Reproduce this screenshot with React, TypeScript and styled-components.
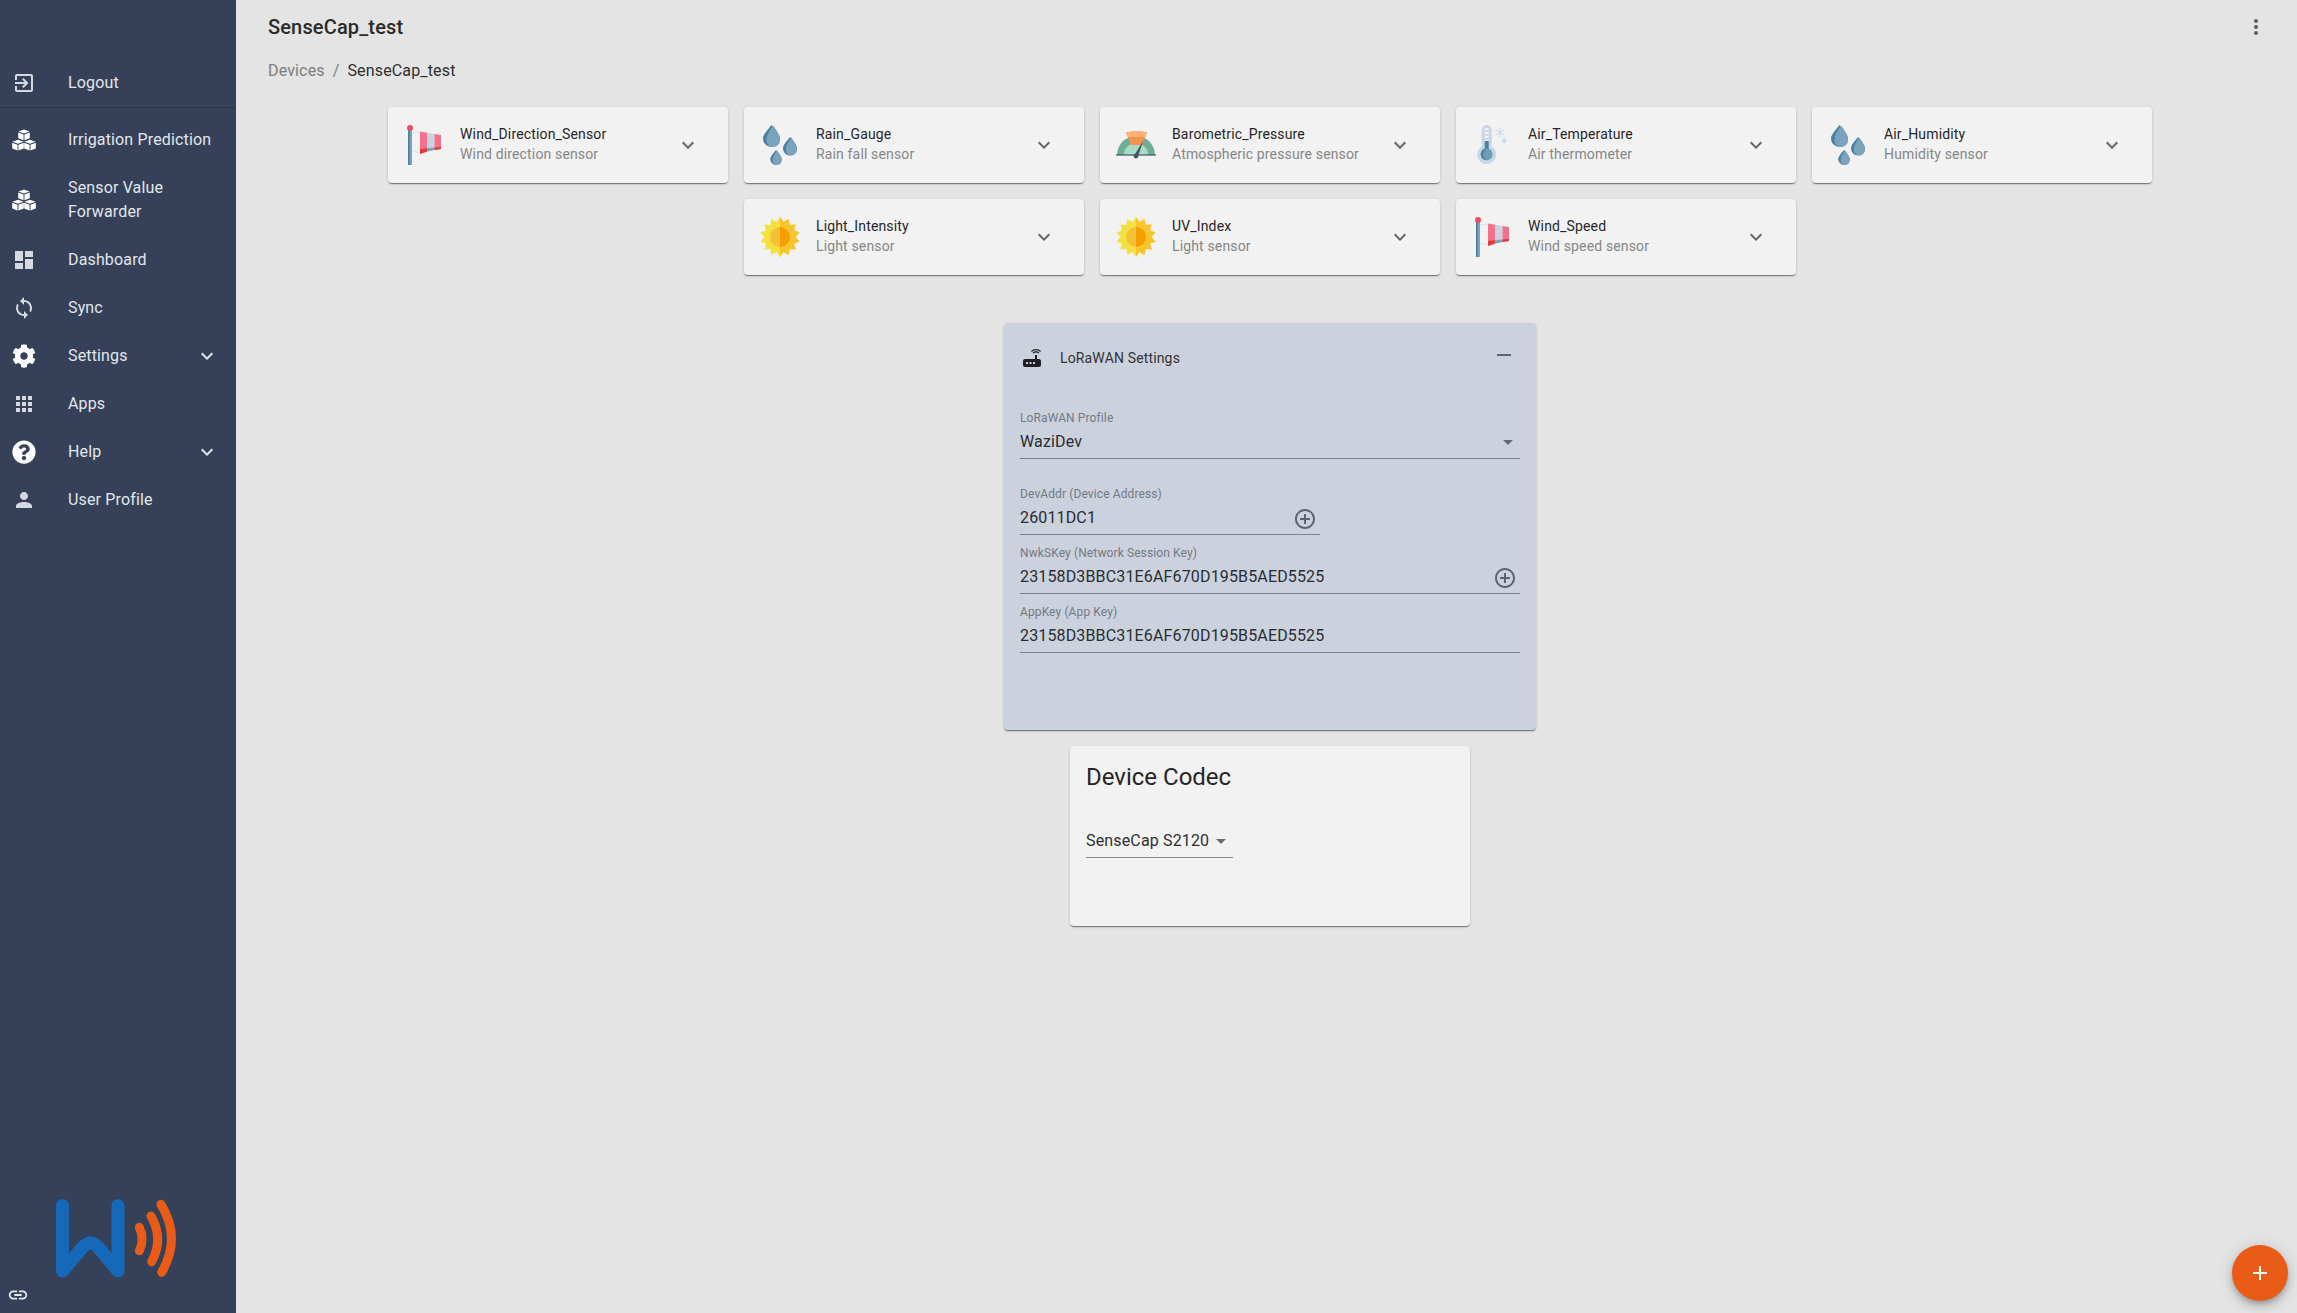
import React from "react";
import styled, { createGlobalStyle } from "styled-components";
import { FaCog, FaQuestionCircle } from "react-icons/fa";

const GlobalStyle = createGlobalStyle`
  html, body {
    margin: 0;
    padding: 0;
    height: 100%;
    overflow: hidden;
    background: #e4e4e4;
    font-family: Roboto, "Liberation Sans", sans-serif;
  }
  * {
    box-sizing: border-box;
  }
`;

const Page = styled.div`
  display: flex;
  width: 2297px;
  height: 1313px;
  overflow: hidden;
  position: relative;
  background: #e4e4e4;
`;

const Sidebar = styled.nav`
  display: flex;
  flex-direction: column;
  flex: 0 0 236px;
  padding-top: 59px;
  background: #344158;
  color: #e2e6ec;
`;

const NavDivider = styled.div`
  height: 1px;
  margin-bottom: 8px;
  background: rgba(0, 0, 0, 0.16);
`;

const NavItem = styled.div`
  display: flex;
  align-items: center;
  min-height: 48px;
  padding: 12px 17px 12px 12px;
  line-height: 24px;
`;

const NavIcon = styled.div<{ $solid?: boolean }>`
  display: flex;
  flex: 0 0 56px;
  color: ${(p) => (p.$solid ? "#ffffff" : "#d6dae0")};
`;

const NavText = styled.div`
  flex: 1;
  font-size: 16px;
  letter-spacing: 0.15px;
`;

const SidebarFooter = styled.div`
  margin-top: auto;
  padding: 0 0 7px 7px;
`;

const LogoSvg = styled.svg`
  display: block;
  width: 130px;
  height: 86px;
  margin: 0 0 3px 43px;
`;

const LinkGlyph = styled.div`
  display: flex;
  color: #e4e7ec;
`;

const Main = styled.main`
  flex: 1;
  padding: 12px 25px 0 32px;
`;

const Header = styled.header`
  display: flex;
  align-items: center;
  justify-content: space-between;
  height: 30px;
`;

const PageTitle = styled.h1`
  margin: 0;
  font-size: 20px;
  font-weight: 500;
  line-height: 30px;
  letter-spacing: 0.15px;
  color: #2b2b2b;
`;

const MoreButton = styled.div`
  display: flex;
  margin-right: 4px;
  color: #5f5f5f;
`;

const Breadcrumbs = styled.div`
  display: flex;
  gap: 8px;
  margin-top: 17px;
  font-size: 16px;
  line-height: 24px;
  letter-spacing: 0.15px;
  color: #7d7d7d;
`;

const Crumb = styled.span<{ $current?: boolean }>`
  color: ${(p) => (p.$current ? "#2f2f2f" : "#7d7d7d")};
`;

const SensorGrid = styled.section`
  display: flex;
  flex-wrap: wrap;
  justify-content: center;
  gap: 16px;
  margin-top: 24px;
`;

const SensorCard = styled.div`
  display: flex;
  align-items: center;
  width: 340px;
  height: 76px;
  padding: 0 16px;
  border-radius: 4px;
  background: #f2f2f2;
  box-shadow: 0 2px 1px -1px rgba(0, 0, 0, 0.3), 0 1px 1px 0 rgba(0, 0, 0, 0.2),
    0 1px 3px 0 rgba(0, 0, 0, 0.14);
`;

const SensorIconBox = styled.div`
  flex: 0 0 40px;
  height: 40px;
  margin-right: 16px;
`;

const SensorText = styled.div`
  flex: 1;
  padding-bottom: 2px;
  font-size: 14px;
  line-height: 20px;
  letter-spacing: 0.15px;
`;

const SensorName = styled.div`
  color: #262626;
`;

const SensorKind = styled.div`
  color: #868686;
`;

const SensorChevron = styled.div`
  display: flex;
  margin-right: 12px;
  color: #666666;
`;

const SettingsColumn = styled.section`
  display: flex;
  flex-direction: column;
  align-items: center;
  gap: 16px;
  margin-top: 48px;
`;

const LoraCard = styled.div`
  width: 532px;
  height: 407px;
  padding: 0 16px;
  border-radius: 4px;
  background: #cbd2dd;
  box-shadow: 0 2px 1px -1px rgba(0, 0, 0, 0.3), 0 1px 1px 0 rgba(0, 0, 0, 0.2),
    0 1px 3px 0 rgba(0, 0, 0, 0.14);
`;

const LoraHeader = styled.div`
  display: flex;
  align-items: center;
  gap: 16px;
  height: 70px;
  margin-bottom: 17px;
  color: #1f1f1f;
`;

const LoraTitle = styled.div`
  flex: 1;
  font-size: 14px;
  line-height: 20px;
  letter-spacing: 0.15px;
  color: #333333;
`;

const CollapseButton = styled.div`
  display: flex;
  margin: 0 4px 6px 0;
  color: #5c6470;
`;

const Field = styled.div<{ $width?: number; $gap: number }>`
  width: ${(p) => (p.$width ? `${p.$width}px` : "100%")};
  margin-bottom: ${(p) => p.$gap}px;
`;

const FieldLabel = styled.div`
  margin-bottom: 4px;
  font-size: 12px;
  line-height: 16px;
  letter-spacing: 0.11px;
  color: #737982;
`;

const FieldControl = styled.div`
  display: flex;
  align-items: center;
  justify-content: space-between;
  height: 29px;
  padding-bottom: 4px;
  border-bottom: 1px solid #7c8087;
  font-size: 16px;
  line-height: 24px;
  letter-spacing: 0.15px;
  color: #2a2d31;
`;

const FieldAction = styled.div`
  display: flex;
  margin: 2px 3px 0 0;
  color: #5c6470;
`;

const SelectArrow = styled.div`
  display: flex;
  flex-shrink: 0;
  color: #666c75;
`;

const CodecCard = styled.div`
  width: 400px;
  height: 180px;
  padding: 14px 16px 0;
  border-radius: 4px;
  background: #f2f2f2;
  box-shadow: 0 2px 1px -1px rgba(0, 0, 0, 0.3), 0 1px 1px 0 rgba(0, 0, 0, 0.2),
    0 1px 3px 0 rgba(0, 0, 0, 0.14);
`;

const CodecTitle = styled.h2`
  margin: 0 0 35px;
  font-size: 24px;
  font-weight: 400;
  line-height: 34px;
  color: #262626;
`;

const CodecSelect = styled.div`
  display: flex;
  align-items: center;
  width: 147px;
  height: 29px;
  padding-bottom: 4px;
  border-bottom: 1px solid #8a8a8a;
  font-size: 16px;
  line-height: 24px;
  letter-spacing: 0.15px;
  white-space: nowrap;
  color: #2f2f2f;
`;

const Fab = styled.div`
  position: absolute;
  right: 9px;
  bottom: 12px;
  display: flex;
  align-items: center;
  justify-content: center;
  width: 56px;
  height: 56px;
  border-radius: 50%;
  background: #e95c17;
  color: #ffffff;
  box-shadow: 0 3px 5px -1px rgba(0, 0, 0, 0.2), 0 6px 10px 0 rgba(0, 0, 0, 0.14),
    0 1px 18px 0 rgba(0, 0, 0, 0.12);
`;

const PATHS = {
  logout:
    "M10.09 15.59L11.5 17l5-5-5-5-1.41 1.41L12.67 11H3v2h9.67l-2.58 2.59zM19 3H5c-1.11 0-2 .9-2 2v4h2V5h14v14H5v-4H3v4c0 1.1.89 2 2 2h14c1.1 0 2-.9 2-2V5c0-1.1-.9-2-2-2z",
  dashboard: "M3 13h8V3H3v10zm0 8h8v-6H3v6zm10 0h8V11h-8v10zm0-18v6h8V3h-8z",
  sync: "M12 4V1L8 5l4 4V6c3.31 0 6 2.69 6 6 0 1.01-.25 1.97-.7 2.8l1.46 1.46C19.54 15.03 20 13.57 20 12c0-4.42-3.58-8-8-8zm0 14c-3.31 0-6-2.69-6-6 0-1.01.25-1.97.7-2.8L5.24 7.74C4.46 8.97 4 10.43 4 12c0 4.42 3.58 8 8 8v3l4-4-4-4v3z",
  apps: "M4 8h4V4H4v4zm6 12h4v-4h-4v4zm-6 0h4v-4H4v4zm0-6h4v-4H4v4zm6 0h4v-4h-4v4zm6-10v4h4V4h-4zm-6 4h4V4h-4v4zm6 6h4v-4h-4v4zm0 6h4v-4h-4v4z",
  person:
    "M12 12c2.21 0 4-1.79 4-4s-1.79-4-4-4-4 1.79-4 4 1.79 4 4 4zm0 2c-2.67 0-8 1.34-8 4v2h16v-2c0-2.66-5.33-4-8-4z",
  expand: "M16.59 8.59L12 13.17 7.41 8.59 6 10l6 6 6-6z",
  link: "M3.9 12c0-1.71 1.39-3.1 3.1-3.1h4V7H7c-2.76 0-5 2.24-5 5s2.24 5 5 5h4v-1.9H7c-1.71 0-3.1-1.39-3.1-3.1zM8 13h8v-2H8v2zm9-6h-4v1.9h4c1.71 0 3.1 1.39 3.1 3.1s-1.39 3.1-3.1 3.1h-4V17h4c2.76 0 5-2.24 5-5s-2.24-5-5-5z",
  more: "M12 8c1.1 0 2-.9 2-2s-.9-2-2-2-2 .9-2 2 .9 2 2 2zm0 2c-1.1 0-2 .9-2 2s.9 2 2 2 2-.9 2-2-.9-2-2-2zm0 6c-1.1 0-2 .9-2 2s.9 2 2 2 2-.9 2-2-.9-2-2-2z",
  add: "M19 13h-6v6h-2v-6H5v-2h6V5h2v6h6v2z",
  addCircle:
    "M13 7h-2v4H7v2h4v4h2v-4h4v-2h-4V7zm-1-5C6.48 2 2 6.48 2 12s4.48 10 10 10 10-4.48 10-10S17.52 2 12 2zm0 18c-4.41 0-8-3.59-8-8s3.59-8 8-8 8 3.59 8 8-3.59 8-8 8z",
  remove: "M19 13H5v-2h14v2z",
  router:
    "M20.2 5.9l.8-.8C19.6 3.7 17.8 3 16 3s-3.6.7-5 2.1l.8.8C13 4.8 14.5 4.2 16 4.2s3 .6 4.2 1.7zm-.9.8c-.9-.9-2.1-1.4-3.3-1.4s-2.4.5-3.3 1.4l.8.8c.7-.7 1.6-1 2.5-1 .9 0 1.8.3 2.5 1l.8-.8zM19 13h-2V9h-2v4H5c-1.1 0-2 .9-2 2v4c0 1.1.9 2 2 2h14c1.1 0 2-.9 2-2v-4c0-1.1-.9-2-2-2zM8 18H6v-2h2v2zm3.5 0h-2v-2h2v2zm3.5 0h-2v-2h2v2z",
  dropdown: "M7 10l5 5 5-5z",
};

const Icon: React.FC<{ name: keyof typeof PATHS; size?: number }> = ({ name, size = 24 }) => (
  <svg width={size} height={size} viewBox="0 0 24 24" fill="currentColor">
    <path d={PATHS[name]} />
  </svg>
);

// three stacked isometric cubes, white faces with thin seams
const CubesIcon = () => {
  const cubes = [
    { x: 12, y: 1.4 },
    { x: 6, y: 11.8 },
    { x: 18, y: 11.8 },
  ];
  return (
    <svg width="24" height="24" viewBox="0 0 24 24" fill="currentColor">
      {cubes.map((c) => (
        <g key={`${c.x}-${c.y}`}>
          <polygon
            points={`${c.x},${c.y} ${c.x + 5.6},${c.y + 2} ${c.x},${c.y + 4} ${c.x - 5.6},${c.y + 2}`}
          />
          <polygon
            points={`${c.x - 5.8},${c.y + 3} ${c.x - 0.45},${c.y + 5} ${c.x - 0.45},${c.y + 10.8} ${c.x - 5.8},${c.y + 8.8}`}
          />
          <polygon
            points={`${c.x + 5.8},${c.y + 3} ${c.x + 0.45},${c.y + 5} ${c.x + 0.45},${c.y + 10.8} ${c.x + 5.8},${c.y + 8.8}`}
          />
        </g>
      ))}
    </svg>
  );
};

const dropPath = (cx: number, top: number, w: number, h: number) => {
  const r = w / 2;
  const bottom = top + h;
  return `M${cx} ${top}C${cx + r * 0.35} ${top + h * 0.18} ${cx + r} ${top + h * 0.42} ${cx + r} ${bottom - r}A${r} ${r} 0 0 1 ${cx - r} ${bottom - r}C${cx - r} ${top + h * 0.42} ${cx - r * 0.35} ${top + h * 0.18} ${cx} ${top}Z`;
};

const DropIcon = () => {
  const drops = [
    { cx: 11.5, top: 0, w: 17, h: 22 },
    { cx: 30, top: 12, w: 14, h: 18.5 },
    { cx: 16, top: 25, w: 11.5, h: 15 },
  ];
  return (
    <svg width="40" height="40" viewBox="0 0 40 40">
      {drops.map((d) => (
        <g key={d.cx}>
          <path d={dropPath(d.cx, d.top, d.w, d.h)} fill="#4a80a0" />
          <path d={dropPath(d.cx + d.w * 0.1, d.top + 0.6, d.w * 0.8, d.h - 0.6)} fill="#7ba3bb" />
        </g>
      ))}
    </svg>
  );
};

const SunIcon = () => {
  const spikes = 14;
  const points = Array.from({ length: spikes * 2 }, (_, i) => {
    const angle = (Math.PI * i) / spikes - Math.PI / 2;
    const radius = i % 2 === 0 ? 20 : 15.5;
    return `${(20 + radius * Math.cos(angle)).toFixed(2)},${(20 + radius * Math.sin(angle)).toFixed(2)}`;
  }).join(" ");
  return (
    <svg width="40" height="40" viewBox="0 0 40 40">
      <polygon points={points} fill="#f5e041" />
      <circle cx="20" cy="20" r="10" fill="#f4c136" />
      <svg x="20" y="0" width="20" height="40" viewBox="20 0 20 40">
        <polygon points={points} fill="#f8c52f" />
        <circle cx="20" cy="20" r="10" fill="#f49e00" />
      </svg>
    </svg>
  );
};

const WindIcon = () => (
  <svg width="40" height="40" viewBox="0 0 40 40">
    <path d="M7 8L17 7M7 26L17 28" stroke="#d5dde8" strokeWidth="0.8" />
    <rect x="4" y="2" width="4" height="38" fill="#7ba3bb" />
    <rect x="4" y="2" width="1.6" height="38" fill="#4a80a0" />
    <circle cx="6" cy="3" r="3" fill="#ee4d62" />
    <path d="M16 6.5L23 7.8V26.5L16 29Z" fill="#f4718d" />
    <path d="M23 7.8L30.5 9V25L23 26.5Z" fill="#c9d3e0" />
    <path d="M30.5 9L37 10V24L30.5 25Z" fill="#f4718d" />
    <path d="M16 24L23 23.2V26.5L16 29Z" fill="#e13a3c" />
    <path d="M23 23.2L30.5 22.6V25L23 26.5Z" fill="#7ba3bb" />
    <path d="M30.5 22.6L37 22V24L30.5 25Z" fill="#e13a3c" />
  </svg>
);

const GaugeIcon = () => (
  <svg width="40" height="40" viewBox="0 0 40 40">
    <path d="M1 30A19 19 0 0 1 39 30Z" fill="#6fae95" />
    <path d="M8 30A12 12 0 0 1 32 30Z" fill="#a8dcc5" />
    <path d="M10 7.5Q20 5 31 7.5L26 20H15Z" fill="#f49350" />
    <path d="M10 7.5Q20 5 31 7.5L29.5 12H11.8Z" fill="#fbb273" />
    <rect x="0" y="29.4" width="40" height="1.2" fill="#3e5566" />
    <path d="M27.5 15L22 31.5L18.5 30Z" fill="#3e5566" />
    <circle cx="20" cy="31" r="2.4" fill="#3e5566" />
  </svg>
);

const ThermoIcon = () => (
  <svg width="40" height="40" viewBox="0 0 40 40">
    <path d="M9.7 5A5 5 0 0 1 19.7 5V21.5A9.5 9.5 0 1 1 9.7 21.5Z" fill="#c9d6e6" />
    <rect x="12.7" y="3" width="4" height="15" fill="#eef2f6" />
    <path d="M12.7 6H16.7M12.7 10H16.7M12.7 14H16.7" stroke="#aebfd2" strokeWidth="1" />
    <rect x="12.7" y="16" width="4" height="9" fill="#4a80a0" />
    <circle cx="14.7" cy="29.3" r="6" fill="#6f9cb5" />
    <path d="M14.7 23.3A6 6 0 0 0 14.7 35.3A7 7 0 0 1 14.7 23.3Z" fill="#4a80a0" />
    <path
      d="M28 2.5V12.5M23.7 5L32.3 10M32.3 5L23.7 10"
      stroke="#c9d6e6"
      strokeWidth="1"
      fill="none"
    />
    <path
      d="M32.3 13V18.4M30 14.4L34.6 17M34.6 14.4L30 17"
      stroke="#c9d6e6"
      strokeWidth="1.2"
      fill="none"
    />
  </svg>
);

const SENSOR_ICONS = {
  wind: WindIcon,
  drop: DropIcon,
  gauge: GaugeIcon,
  thermo: ThermoIcon,
  sun: SunIcon,
};

const sensors: { name: string; kind: string; icon: keyof typeof SENSOR_ICONS }[] = [
  { name: "Wind_Direction_Sensor", kind: "Wind direction sensor", icon: "wind" },
  { name: "Rain_Gauge", kind: "Rain fall sensor", icon: "drop" },
  { name: "Barometric_Pressure", kind: "Atmospheric pressure sensor", icon: "gauge" },
  { name: "Air_Temperature", kind: "Air thermometer", icon: "thermo" },
  { name: "Air_Humidity", kind: "Humidity sensor", icon: "drop" },
  { name: "Light_Intensity", kind: "Light sensor", icon: "sun" },
  { name: "UV_Index", kind: "Light sensor", icon: "sun" },
  { name: "Wind_Speed", kind: "Wind speed sensor", icon: "wind" },
];

const navItems: { label: string; icon: React.ReactNode; solid?: boolean; expandable?: boolean }[] = [
  { label: "Irrigation Prediction", icon: <CubesIcon />, solid: true },
  { label: "Sensor Value Forwarder", icon: <CubesIcon />, solid: true },
  { label: "Dashboard", icon: <Icon name="dashboard" /> },
  { label: "Sync", icon: <Icon name="sync" /> },
  { label: "Settings", icon: <FaCog size={24} />, solid: true, expandable: true },
  { label: "Apps", icon: <Icon name="apps" /> },
  { label: "Help", icon: <FaQuestionCircle size={24} />, solid: true, expandable: true },
  { label: "User Profile", icon: <Icon name="person" /> },
];

const WaziupLogo = () => (
  <LogoSvg viewBox="0 0 130 86">
    <path
      d="M12.5 10.5V76L33 52Q40.7 44 48 52L68 76V10.5"
      fill="none"
      stroke="#1668b8"
      strokeWidth="13"
      strokeLinecap="round"
      strokeLinejoin="round"
    />
    <g fill="none" stroke="#e95c17" strokeWidth="9" strokeLinecap="round">
      <path d="M89.3 32.3Q95 44 89.3 55.7" />
      <path d="M101 21Q114 44 101.7 66.7" />
      <path d="M111 9.3Q131.6 43 111.7 77.3" />
    </g>
  </LogoSvg>
);

const App: React.FC = () => {
  return (
    <Page>
      <GlobalStyle />
      <Sidebar>
        <NavItem>
          <NavIcon>
            <Icon name="logout" />
          </NavIcon>
          <NavText>Logout</NavText>
        </NavItem>
        <NavDivider />
        {navItems.map((item) => (
          <NavItem key={item.label}>
            <NavIcon $solid={item.solid}>{item.icon}</NavIcon>
            <NavText>{item.label}</NavText>
            {item.expandable && <Icon name="expand" />}
          </NavItem>
        ))}
        <SidebarFooter>
          <WaziupLogo />
          <LinkGlyph>
            <Icon name="link" size={22} />
          </LinkGlyph>
        </SidebarFooter>
      </Sidebar>

      <Main>
        <Header>
          <PageTitle>SenseCap_test</PageTitle>
          <MoreButton>
            <Icon name="more" />
          </MoreButton>
        </Header>
        <Breadcrumbs>
          <Crumb>Devices</Crumb>
          <Crumb>/</Crumb>
          <Crumb $current>SenseCap_test</Crumb>
        </Breadcrumbs>

        <SensorGrid>
          {sensors.map((sensor) => {
            const SensorIcon = SENSOR_ICONS[sensor.icon];
            return (
              <SensorCard key={sensor.name}>
                <SensorIconBox>
                  <SensorIcon />
                </SensorIconBox>
                <SensorText>
                  <SensorName>{sensor.name}</SensorName>
                  <SensorKind>{sensor.kind}</SensorKind>
                </SensorText>
                <SensorChevron>
                  <Icon name="expand" />
                </SensorChevron>
              </SensorCard>
            );
          })}
        </SensorGrid>

        <SettingsColumn>
          <LoraCard>
            <LoraHeader>
              <Icon name="router" />
              <LoraTitle>LoRaWAN Settings</LoraTitle>
              <CollapseButton>
                <Icon name="remove" />
              </CollapseButton>
            </LoraHeader>
            <Field $gap={27}>
              <FieldLabel>LoRaWAN Profile</FieldLabel>
              <FieldControl>
                WaziDev
                <SelectArrow>
                  <Icon name="dropdown" />
                </SelectArrow>
              </FieldControl>
            </Field>
            <Field $gap={10} $width={300}>
              <FieldLabel>DevAddr (Device Address)</FieldLabel>
              <FieldControl>
                26011DC1
                <FieldAction>
                  <Icon name="addCircle" />
                </FieldAction>
              </FieldControl>
            </Field>
            <Field $gap={10}>
              <FieldLabel>NwkSKey (Network Session Key)</FieldLabel>
              <FieldControl>
                23158D3BBC31E6AF670D195B5AED5525
                <FieldAction>
                  <Icon name="addCircle" />
                </FieldAction>
              </FieldControl>
            </Field>
            <Field $gap={0}>
              <FieldLabel>AppKey (App Key)</FieldLabel>
              <FieldControl>23158D3BBC31E6AF670D195B5AED5525</FieldControl>
            </Field>
          </LoraCard>

          <CodecCard>
            <CodecTitle>Device Codec</CodecTitle>
            <CodecSelect>
              SenseCap S2120
              <SelectArrow>
                <Icon name="dropdown" />
              </SelectArrow>
            </CodecSelect>
          </CodecCard>
        </SettingsColumn>
      </Main>

      <Fab>
        <Icon name="add" />
      </Fab>
    </Page>
  );
};

export default App;
